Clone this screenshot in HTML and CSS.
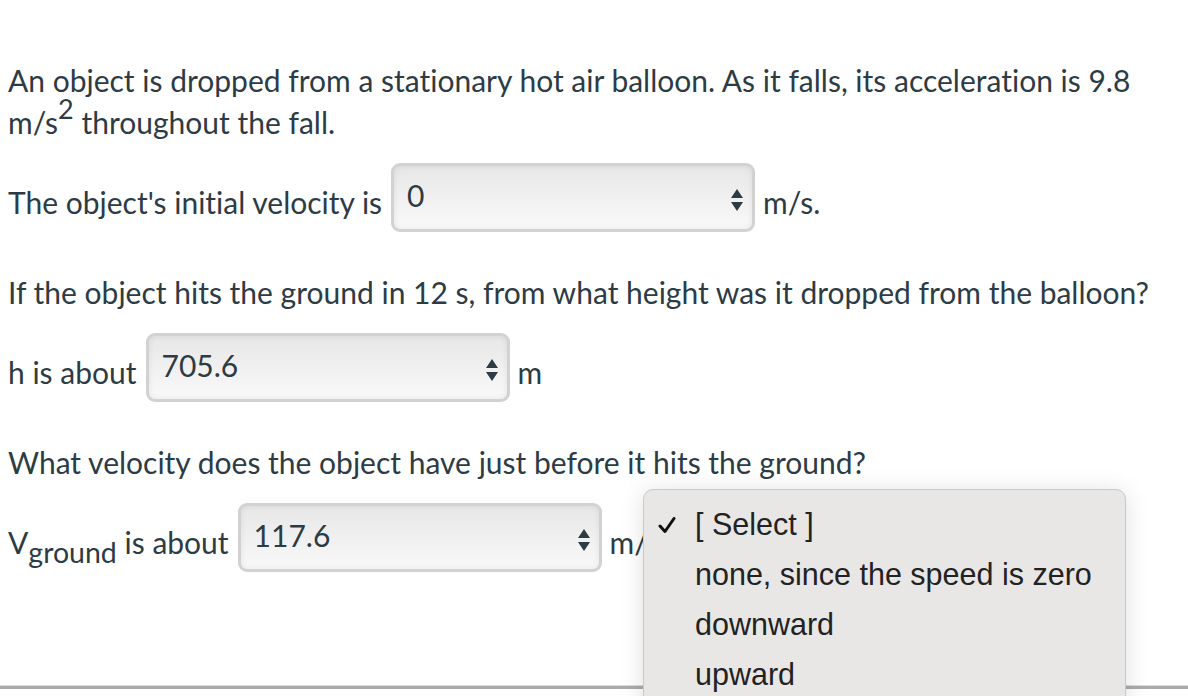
FILE: index.html
```html
<!DOCTYPE html>
<html lang="en">
  <head>
    <meta charset="UTF-8" />
    <title>Free Fall Question</title>
    <link rel="stylesheet" href="styles.css">
  </head>
  <body>
    <div class="question">
      <p class="intro">An object is dropped from a stationary hot air balloon. As it falls, its acceleration is 9.8 m/s<sup>2</sup> throughout the fall.</p>

      <div class="answer-row first">
        <span>The object's initial velocity is</span>
        <div class="fake-select">
          <span class="value">0</span>
          <svg class="arrows" width="12" height="22" viewBox="0 0 12 22"><path d="M6 0 L12 9 L0 9 Z M0 13 L12 13 L6 22 Z" fill="#2d3b45"/></svg>
        </div>
        <span class="unit">m/s.</span>
      </div>

      <p class="ask">If the object hits the ground in 12 s, from what height was it dropped from the balloon?</p>

      <div class="answer-row">
        <span>h is about</span>
        <div class="fake-select">
          <span class="value">705.6</span>
          <svg class="arrows" width="12" height="22" viewBox="0 0 12 22"><path d="M6 0 L12 9 L0 9 Z M0 13 L12 13 L6 22 Z" fill="#2d3b45"/></svg>
        </div>
        <span class="unit">m</span>
      </div>

      <p class="ask">What velocity does the object have just before it hits the ground?</p>

      <div class="answer-row">
        <span>V<sub>ground</sub> is about</span>
        <div class="fake-select">
          <span class="value">117.6</span>
          <svg class="arrows" width="12" height="22" viewBox="0 0 12 22"><path d="M6 0 L12 9 L0 9 Z M0 13 L12 13 L6 22 Z" fill="#2d3b45"/></svg>
        </div>
        <span class="unit">m/s</span>
      </div>
    </div>

    <div class="divider"></div>

    <!-- open dropdown for the direction select -->
    <div class="menu">
      <div class="menu-item checked">
        <svg class="check" width="18" height="18" viewBox="0 0 18 18"><path d="M2 10 L7 15.5 L16 2.5" fill="none" stroke="#111" stroke-width="3" stroke-linecap="round" stroke-linejoin="round"/></svg>
        [ Select ]
      </div>
      <div class="menu-item">none, since the speed is zero</div>
      <div class="menu-item">downward</div>
      <div class="menu-item">upward</div>
    </div>
  </body>
</html>
```

FILE: styles.css
```css
body {
  margin: 0;
  font-family: Lato, "Open Sans", sans-serif;
  font-size: 30px;
  line-height: 42px;
  color: #2d3b45;
  background: white;
  overflow: hidden;
  height: 696px;
  position: relative;
  font-variant-ligatures: none;
}
.question {
  padding-left: 8px;
}
p {
  margin: 0;
}
.intro {
  padding-top: 59px;
}
.ask {
  margin-top: 39px;
}
sup {
  font-size: 0.9em;
  line-height: 0;
  vertical-align: 0.55em;
}
sub {
  font-size: 0.95em;
  line-height: 0;
  vertical-align: -0.3em;
}
.answer-row {
  display: flex;
  align-items: center;
  height: 69px;
  margin-top: 20px;
}
.answer-row > span:first-child {
  padding-top: 8px;
}
.fake-select {
  box-sizing: border-box;
  width: 364px;
  height: 69px;
  margin-left: 9px;
  border: 3px solid #d2d2d2;
  border-radius: 9px;
  background: linear-gradient(#e7e7e7, #f9f9f9);
  box-shadow: inset 0 0 6px rgba(0, 0, 0, 0.08);
  display: flex;
  justify-content: space-between;
  align-items: flex-start;
  padding: 8px 9px 0 13px;
}
.fake-select .value {
  line-height: 42px;
}
.fake-select .arrows {
  margin-top: 15px;
}
.unit {
  margin-left: 8px;
  padding-top: 8px;
}
.divider {
  position: absolute;
  left: 0;
  right: 0;
  top: 685px;
  border-top: 1px solid #dcdcdc;
  border-bottom: 3px solid #ababab;
}
.menu {
  position: absolute;
  left: 643px;
  top: 489px;
  width: 483px;
  height: 240px;
  box-sizing: border-box;
  background: #e8e7e6;
  border: 1px solid #c9c9c9;
  border-radius: 10px;
  box-shadow: 0 2px 24px rgba(0, 0, 0, 0.12);
  padding-top: 14px;
  font-family: "Liberation Sans", Arial, sans-serif;
  font-size: 30.5px;
  color: #222;
}
.menu-item {
  height: 50px;
  line-height: 40px;
  padding-left: 51px;
  position: relative;
}
.menu-item .check {
  position: absolute;
  left: 14px;
  top: 12px;
}
```
